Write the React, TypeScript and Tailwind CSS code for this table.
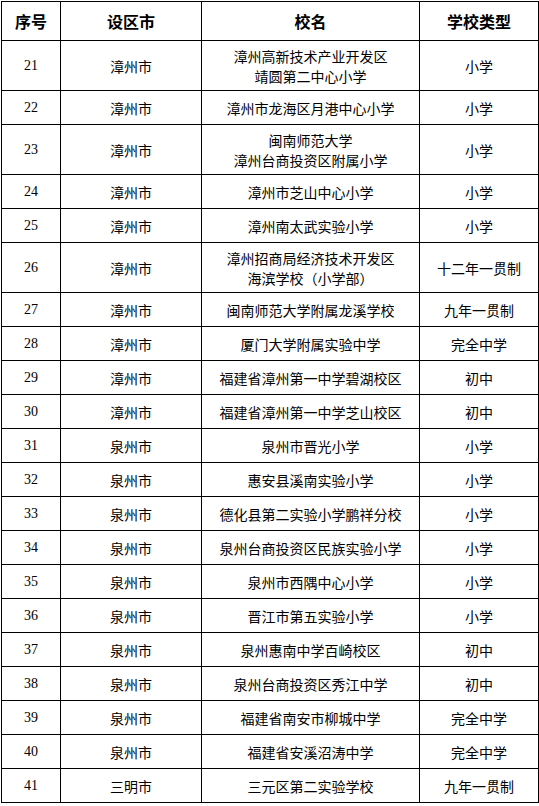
const rows: { no: number; city: string; name: string[]; kind: string }[] = [
  { no: 21, city: "漳州市", name: ["漳州高新技术产业开发区", "靖圆第二中心小学"], kind: "小学" },
  { no: 22, city: "漳州市", name: ["漳州市龙海区月港中心小学"], kind: "小学" },
  { no: 23, city: "漳州市", name: ["闽南师范大学", "漳州台商投资区附属小学"], kind: "小学" },
  { no: 24, city: "漳州市", name: ["漳州市芝山中心小学"], kind: "小学" },
  { no: 25, city: "漳州市", name: ["漳州南太武实验小学"], kind: "小学" },
  { no: 26, city: "漳州市", name: ["漳州招商局经济技术开发区", "海滨学校（小学部）"], kind: "十二年一贯制" },
  { no: 27, city: "漳州市", name: ["闽南师范大学附属龙溪学校"], kind: "九年一贯制" },
  { no: 28, city: "漳州市", name: ["厦门大学附属实验中学"], kind: "完全中学" },
  { no: 29, city: "漳州市", name: ["福建省漳州第一中学碧湖校区"], kind: "初中" },
  { no: 30, city: "漳州市", name: ["福建省漳州第一中学芝山校区"], kind: "初中" },
  { no: 31, city: "泉州市", name: ["泉州市晋光小学"], kind: "小学" },
  { no: 32, city: "泉州市", name: ["惠安县溪南实验小学"], kind: "小学" },
  { no: 33, city: "泉州市", name: ["德化县第二实验小学鹏祥分校"], kind: "小学" },
  { no: 34, city: "泉州市", name: ["泉州台商投资区民族实验小学"], kind: "小学" },
  { no: 35, city: "泉州市", name: ["泉州市西隅中心小学"], kind: "小学" },
  { no: 36, city: "泉州市", name: ["晋江市第五实验小学"], kind: "小学" },
  { no: 37, city: "泉州市", name: ["泉州惠南中学百崎校区"], kind: "初中" },
  { no: 38, city: "泉州市", name: ["泉州台商投资区秀江中学"], kind: "初中" },
  { no: 39, city: "泉州市", name: ["福建省南安市柳城中学"], kind: "完全中学" },
  { no: 40, city: "泉州市", name: ["福建省安溪沼涛中学"], kind: "完全中学" },
  { no: 41, city: "三明市", name: ["三元区第二实验学校"], kind: "九年一贯制" },
]

export default function App() {
  return (
    <div className="bg-white w-[539px] h-[806px] overflow-hidden pt-[1px] pl-[1px] text-black font-['Noto_Sans_CJK_SC',sans-serif]">
      <table className="table-fixed border-collapse w-[537px] text-[14px] leading-[20px]">
        <colgroup>
          <col className="w-[59px]" />
          <col className="w-[141px]" />
          <col className="w-[218px]" />
          <col className="w-[119px]" />
        </colgroup>
        <thead>
          <tr className="h-[39px] text-[16px] font-bold">
            <th className="border border-black text-center">序号</th>
            <th className="border border-black text-center">设区市</th>
            <th className="border border-black text-center">校名</th>
            <th className="border border-black text-center">学校类型</th>
          </tr>
        </thead>
        <tbody>
          {rows.map((r) => (
            <tr key={r.no} className={r.name.length > 1 ? "h-[50px]" : "h-[34px]"}>
              <td className="border border-black text-center p-0 font-['Liberation_Serif',serif] text-[14px]">{r.no}</td>
              <td className="border border-black text-center p-0">{r.city}</td>
              <td className="border border-black text-center p-0">
                {r.name.map((n) => (
                  <div key={n}>{n}</div>
                ))}
              </td>
              <td className="border border-black text-center p-0">{r.kind}</td>
            </tr>
          ))}
        </tbody>
      </table>
    </div>
  )
}
